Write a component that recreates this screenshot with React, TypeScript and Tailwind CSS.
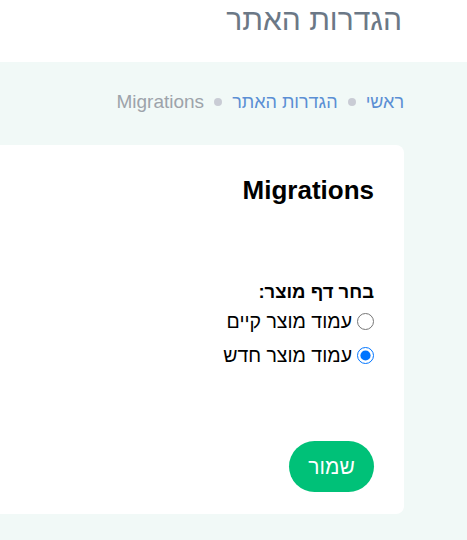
import { useState } from "react"

// Site settings page – migrations card
export default function App() {
  const [productPage, setProductPage] = useState("new")

  return (
    <div
      dir="rtl"
      className="min-h-screen bg-[#f1f9f7] font-['Liberation_Sans',Arial,sans-serif]"
    >
      <header className="h-[62px] bg-white pr-[65px] pt-[3px]">
        <h1 className="text-[30px] leading-[34px] text-[#6b7886]">הגדרות האתר</h1>
      </header>

      <main className="pr-[63px] pt-[28px] pb-[25px]">
        <nav className="flex items-center gap-[10px] text-[18px] leading-[24px]">
          <a className="text-[#5b8fd4]">ראשי</a>
          <span className="h-[8px] w-[8px] rounded-full bg-[#c9ccd5]" />
          <a className="text-[#5b8fd4]">הגדרות האתר</a>
          <span className="h-[8px] w-[8px] rounded-full bg-[#c9ccd5]" />
          <span className="text-[19px] text-[#9da3aa]">Migrations</span>
        </nav>

        <section className="-ml-[20px] mt-[31px] rounded-lg bg-white pr-[30px] pt-[30px] pb-[22px]">
          <h2 className="text-[26px] font-bold leading-[30px] text-black">Migrations</h2>

          <div className="mt-[75px]">
            <p className="text-[18.5px] font-bold leading-[24px] text-black">בחר דף מוצר:</p>
            <label className="mt-[5px] flex items-center gap-[5px] text-[19.5px] leading-[24px] text-black">
              <input
                type="radio"
                name="product"
                className="m-0 h-[17px] w-[17px]"
                checked={productPage === "old"}
                onChange={() => setProductPage("old")}
              />
              עמוד מוצר קיים
            </label>
            <label className="mt-[10px] flex items-center gap-[5px] text-[19.5px] leading-[24px] text-black">
              <input
                type="radio"
                name="product"
                className="m-0 h-[17px] w-[17px]"
                checked={productPage === "new"}
                onChange={() => setProductPage("new")}
              />
              עמוד מוצר חדש
            </label>
          </div>

          <button className="mt-[74px] h-[51px] w-[85px] rounded-full bg-[#00c178] text-[21px] text-white">
            שמור
          </button>
        </section>
      </main>
    </div>
  )
}
